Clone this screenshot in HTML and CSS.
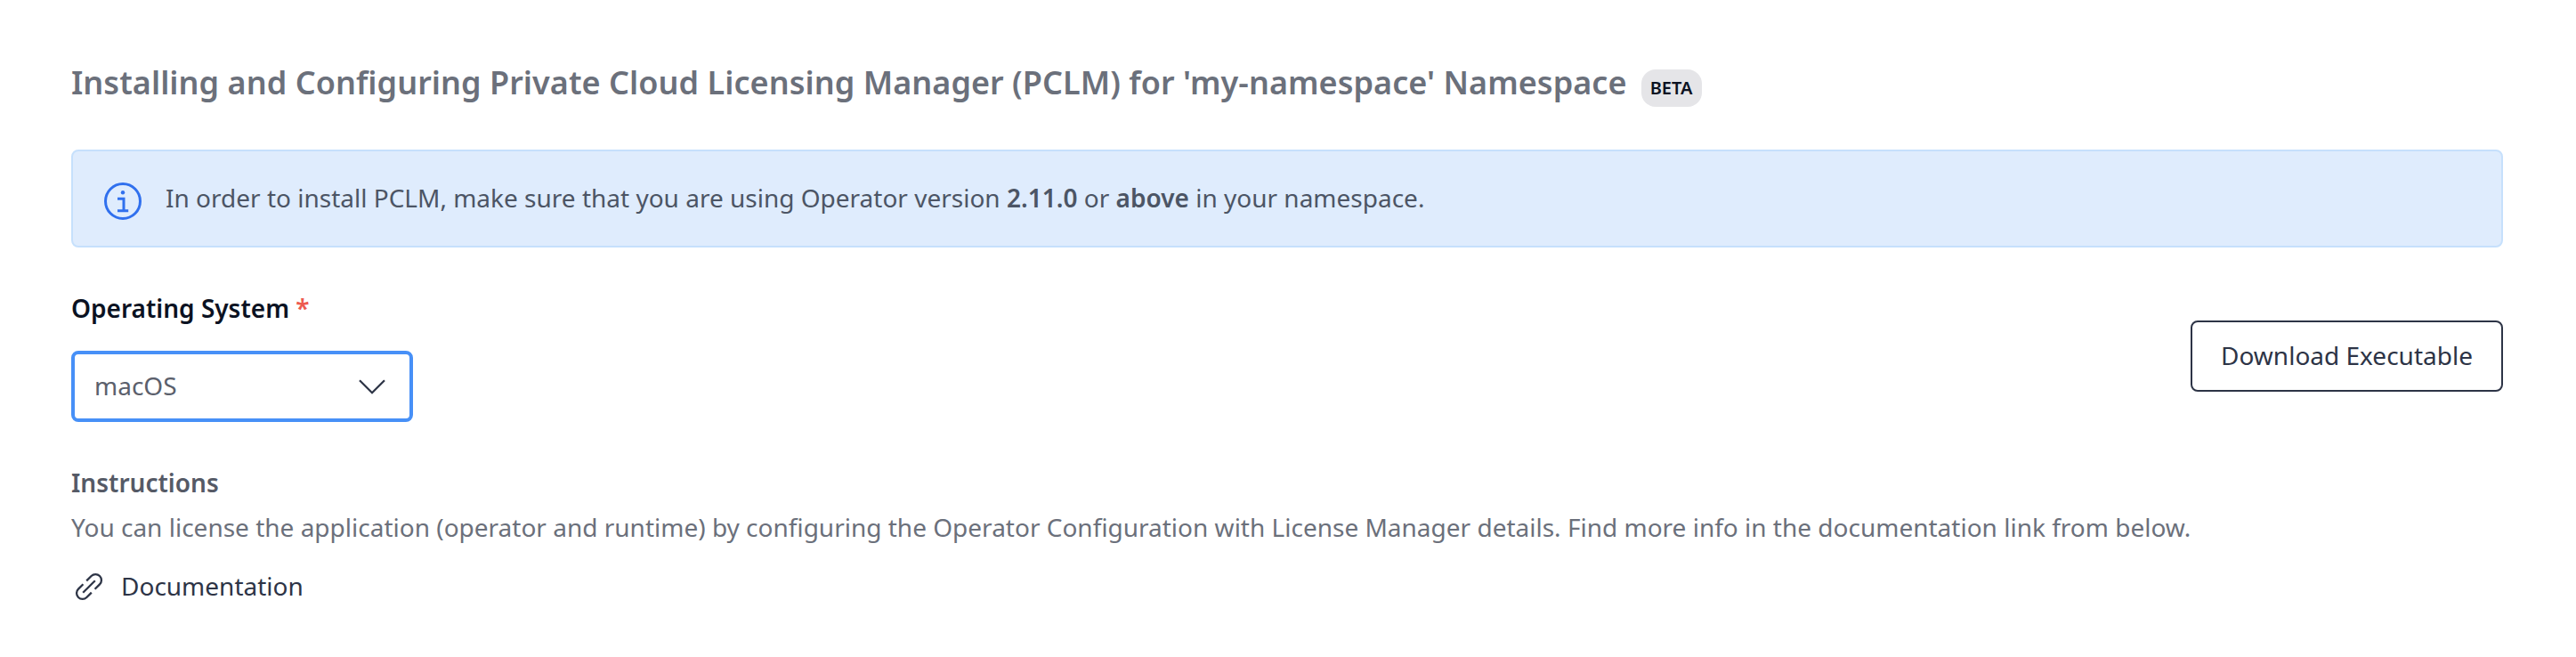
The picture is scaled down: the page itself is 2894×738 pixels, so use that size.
FILE: index.html
```html
<!DOCTYPE html>
<html lang="en">
<head>
<meta charset="utf-8">
<title>Private Cloud Licensing Manager</title>
<link rel="stylesheet" href="styles.css">
</head>
<body>
<main class="page">
  <header class="heading">
    <h1 class="title">Installing and Configuring Private Cloud Licensing Manager (PCLM) for 'my-namespace' Namespace</h1>
    <span class="badge">BETA</span>
  </header>
  <div class="notice">
    <svg class="notice-icon" viewBox="0 0 42 42" fill="none" stroke="currentColor" stroke-width="3">
      <circle cx="21" cy="21" r="19.5"/>
      <path d="M15 18.3h7v13.2M15 31.7h12.2"/>
      <circle cx="21" cy="11.3" r="2.2" fill="currentColor" stroke="none"/>
    </svg>
    <p class="notice-text">In order to install PCLM, make sure that you are using Operator version <b>2.11.0</b> or <b>above</b> in your namespace.</p>
  </div>
  <section class="controls">
    <div class="field">
      <div class="label">Operating System <span class="required">*</span></div>
      <div class="select" role="combobox" tabindex="0">
        <span class="value">macOS</span>
        <svg class="chevron" viewBox="0 0 32 32" fill="none" stroke="currentColor" stroke-width="2.3"><path d="M2 9.2L16 23.2L30 9.2"/></svg>
      </div>
    </div>
    <button class="download" type="button">Download Executable</button>
  </section>
  <section class="instructions">
    <h2 class="subtitle">Instructions</h2>
    <p class="description">You can license the application (operator and runtime) by configuring the Operator Configuration with License Manager details. Find more info in the documentation link from below.</p>
    <a class="doc-link">
      <svg class="link-icon" viewBox="0 0 32 32" fill="none" stroke="currentColor" stroke-width="2.3">
        <path d="M9.2 22.8L22.8 9.2"/>
        <path d="M13.2 9.4L18.6 4A6.6 6.6 0 0 1 28 13.4L22.6 18.8"/>
        <path d="M18.8 22.6L13.4 28A6.6 6.6 0 0 1 4 18.6L9.4 13.2"/>
      </svg>
      <span>Documentation</span>
    </a>
  </section>
</main>
</body>
</html>
```
FILE: styles.css
```css
* { box-sizing: border-box; }
body {
  margin: 0;
  background: #fff;
  color: #2d3446;
  font: 400 28px/40px "Noto Sans", sans-serif;
}
.page { padding: 68px 82px 0 80px; }
h1, h2, p { margin: 0; }
.heading { display: flex; height: 100px; align-items: flex-start; }
.title {
  color: #6b707b;
  font-size: 36px;
  line-height: 50px;
  font-weight: 600;
  letter-spacing: 0.04px;
  white-space: nowrap;
}
.badge {
  width: 68px;
  height: 42px;
  margin: 10px 0 0 16px;
  border-radius: 16px;
  background: #e5e5e8;
  color: #0b1222;
  font-size: 20px;
  line-height: 41px;
  font-weight: 600;
  text-align: center;
}
.notice {
  display: flex;
  align-items: center;
  height: 110px;
  padding-left: 35px;
  gap: 27px;
  border: 2px solid #c6e0fc;
  border-radius: 8px;
  background: #dfecfd;
  color: #4c5565;
}
.notice-icon { width: 42px; height: 42px; margin-top: 6px; color: #3070ee; }
.notice-text { padding-bottom: 2px; white-space: nowrap; }
.notice b { font-weight: 600; }
.controls { display: flex; justify-content: space-between; align-items: center; margin-top: 48px; }
.label { color: #0b1222; font-weight: 600; }
.required { color: #ed5a50; }
.select {
  display: flex;
  align-items: center;
  justify-content: space-between;
  width: 384px;
  height: 80px;
  margin-top: 28px;
  padding: 0 26px 0 22px;
  border: 4px solid #4790f7;
  border-radius: 8px;
  color: #5b606c;
}
.value { padding-bottom: 2px; }
.chevron { width: 32px; height: 32px; color: #2d3446; }
.download {
  width: 351px;
  height: 80px;
  padding: 0 0 2px;
  border: 2px solid #2d3446;
  border-radius: 8px;
  background: #fff;
  color: #2d3446;
  font: inherit;
}
.instructions { margin-top: 48px; }
.subtitle { color: #555a66; font-size: 28px; line-height: 40px; font-weight: 600; }
.description { margin-top: 10px; color: #6b707b; white-space: nowrap; }
.doc-link { display: flex; align-items: center; gap: 20px; margin-top: 26px; padding-left: 4px; }
.link-icon { width: 32px; height: 32px; margin-top: 2px; }
```
